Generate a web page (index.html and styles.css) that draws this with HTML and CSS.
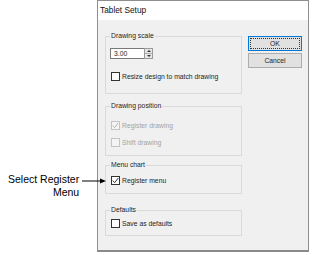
FILE: index.html
```
<!DOCTYPE html>
<html>
	<head>
		<title>Tablet Setup</title>
		<meta charset="UTF-8">
		<link rel="stylesheet" href="styles.css">
	</head>
	<body>
		<div class="page">
			<div class="side">
				<div class="callout">
					<div class="callout-text">Select Register<br>Menu</div>
					<svg class="callout-line" width="25" height="8" viewBox="0 0 25 8">
						<line x1="0" y1="4" x2="19" y2="4" stroke="#000" stroke-width="1"/>
						<polygon points="18,1.5 24,4 18,6.5" fill="#000"/>
					</svg>
				</div>
			</div>
			<div class="dialog">
				<div class="titlebar">Tablet Setup</div>
				<div class="content">
					<div class="groups">
						<fieldset class="group g1">
							<legend>Drawing scale</legend>
							<div class="spin">
								<div class="spin-box">3.00</div>
								<div class="spin-btns">
									<div class="spin-btn"><span class="tri up"></span></div>
									<div class="spin-btn"><span class="tri down"></span></div>
								</div>
							</div>
							<div class="check-row r-resize">
								<span class="box"></span>
								<span class="lbl">Resize design to match drawing</span>
							</div>
						</fieldset>
						<fieldset class="group g2">
							<legend>Drawing position</legend>
							<div class="check-row disabled r-register">
								<span class="box"><svg width="7" height="7" viewBox="0 0 7 7"><polyline points="0.8,3.6 2.6,5.6 6.3,1" fill="none" stroke="#b5b5b5" stroke-width="1"/></svg></span>
								<span class="lbl">Register drawing</span>
							</div>
							<div class="check-row disabled r-shift">
								<span class="box"></span>
								<span class="lbl">Shift drawing</span>
							</div>
						</fieldset>
						<fieldset class="group g3">
							<legend>Menu chart</legend>
							<div class="check-row r-menu">
								<span class="box"><svg width="7" height="7" viewBox="0 0 7 7"><polyline points="0.8,3.6 2.6,5.6 6.3,1" fill="none" stroke="#333" stroke-width="1"/></svg></span>
								<span class="lbl">Register menu</span>
							</div>
						</fieldset>
						<fieldset class="group g4">
							<legend>Defaults</legend>
							<div class="check-row r-defaults">
								<span class="box"></span>
								<span class="lbl">Save as defaults</span>
							</div>
						</fieldset>
					</div>
					<div class="buttons">
						<div class="btn default"><span>OK</span></div>
						<div class="btn">Cancel</div>
					</div>
				</div>
			</div>
		</div>
	</body>
</html>
```
FILE: styles.css
```
body {
	margin: 0;
	background: #fff;
	font-family: "Liberation Sans", Arial, sans-serif;
}
.page {
	display: flex;
	width: 325px;
	height: 255px;
}
.side {
	width: 97px;
	flex: none;
	position: relative;
	z-index: 1;
}
.callout {
	display: flex;
	align-items: flex-start;
	margin-top: 173px;
	margin-left: 8px;
}
.callout-text {
	width: 75px;
	text-align: right;
	white-space: nowrap;
	font-size: 10.5px;
	line-height: 13px;
	color: #000;
}
.callout-line {
	margin-left: 3px;
	margin-top: 4px;
	flex: none;
}
.dialog {
	width: 212px;
	height: 252px;
	box-sizing: border-box;
	background: #f0f0f0;
	border: 1px solid #8e8e8e;
	border-bottom: 2px solid #8a8a8a;
	font-size: 6.8px;
	color: #1e1e1e;
}
.titlebar {
	height: 19px;
	background: #fff;
	font-size: 8.3px;
	line-height: 19px;
	padding-left: 2px;
	color: #111;
}
.content {
	display: flex;
	padding: 12px 0 0 7px;
	gap: 6px;
}
.groups {
	width: 137px;
}
.group {
	margin: 0;
	padding: 0 4px;
	border: 1px solid #dadada;
}
.group legend {
	padding: 0 1px;
	line-height: 8px;
	height: 8px;
	font-size: 6.8px;
}
.g1 { padding-bottom: 12px; }
.g2 { margin-top: 8px; padding-bottom: 8px; }
.g3 { margin-top: 5px; padding-bottom: 8px; }
.g4 { margin-top: 12px; padding-bottom: 7px; }
.spin {
	display: flex;
	margin-top: 8px;
	height: 11px;
}
.spin-box {
	width: 34px;
	height: 11px;
	box-sizing: border-box;
	background: #fff;
	border: 1px solid #7a7a7a;
	border-right: none;
	padding-left: 3px;
	line-height: 9px;
	font-size: 6.8px;
}
.spin-btns {
	width: 9px;
	height: 11px;
	box-sizing: border-box;
	border: 1px solid #9a9a9a;
	display: flex;
	flex-direction: column;
	background: #e6e6e6;
}
.spin-btn {
	flex: 1;
	display: flex;
	align-items: center;
	justify-content: center;
}
.spin-btn + .spin-btn {
	border-top: 1px solid #b0b0b0;
}
.tri {
	width: 0;
	height: 0;
	border-left: 2px solid transparent;
	border-right: 2px solid transparent;
}
.tri.up { border-bottom: 2px solid #333; }
.tri.down { border-top: 2px solid #333; }
.check-row {
	display: flex;
	align-items: center;
	height: 9px;
	padding-left: 1px;
}
.check-row .box {
	width: 9px;
	height: 9px;
	box-sizing: border-box;
	border: 1px solid #333;
	background: #fff;
	display: flex;
	align-items: center;
	justify-content: center;
	flex: none;
}
.check-row .lbl {
	margin-left: 2px;
	white-space: nowrap;
	line-height: 9px;
}
.check-row.disabled .box {
	border-color: #c4c4c4;
	background: #f4f4f4;
}
.check-row.disabled .lbl {
	color: #a3a3a3;
}
.r-resize { margin-top: 13px; }
.r-register { margin-top: 11px; }
.r-shift { margin-top: 8px; }
.r-menu { margin-top: 7px; }
.r-defaults { margin-top: 5px; }
.buttons {
	display: flex;
	flex-direction: column;
	gap: 2px;
	margin-top: 4px;
}
.btn {
	width: 54px;
	height: 15px;
	box-sizing: border-box;
	background: #e1e1e1;
	border: 1px solid #adadad;
	display: flex;
	align-items: center;
	justify-content: center;
	font-size: 6.8px;
	color: #1e1e1e;
}
.btn.default {
	border-color: #0078d7;
	padding: 1px;
}
.btn.default span {
	flex: 1;
	align-self: stretch;
	display: flex;
	align-items: center;
	justify-content: center;
	border: 1px dotted #333;
}
```
